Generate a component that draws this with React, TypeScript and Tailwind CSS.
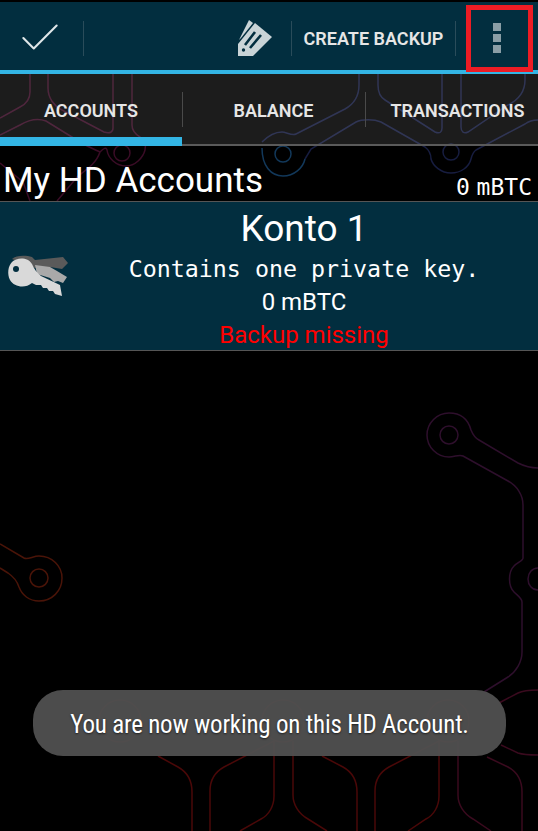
import React from 'react';
import { Check } from 'lucide-react';

// Circuit traces behind the whole page
function CircuitBackground() {
  return (
    <svg className="absolute inset-0 h-[831px] w-[538px]" viewBox="0 0 538 831" fill="none" strokeWidth="1.5">
      {/* left pad */}
      <g stroke="#4a1408">
        <path d="M0 544 L24 558 C28 560 33 556 39 556 C52 556 62 566 62 578 C62 591 52 601 39 601 C29 601 22 595 19 587 C17 581 14 577 8 573 L0 568" />
        <circle cx="39" cy="578" r="9" />
      </g>
      {/* right column */}
      <g stroke="#2e0f2c">
        <path d="M538 468 C530 468 524 466 518 463 L479 440 C475 438 473 435 471 430 C468 419 460 413 449 413 C437 413 427 423 427 435 C427 447 437 457 449 457 C455 457 459 454 463 456 L508 481 C517 486 523 495 523 505 L523 558 C523 561 518 562 514 566 C508 572 508 586 514 592 C518 596 522 598 522 602 L522 652 C522 662 516 672 508 677 L484 692" />
        <circle cx="449" cy="435" r="9" />
        <path d="M538 568 C532 568 528 573 528 579 C528 585 532 590 538 590" />
      </g>
      {/* pads under the toast */}
      <g stroke="#4a1010">
        <circle cx="120" cy="721" r="21" />
        <circle cx="283" cy="721" r="21" />
        <circle cx="448" cy="721" r="21" />
      </g>
      {/* bottom group */}
      <g stroke="#4a0808">
        <path d="M158 756 L178 767 C187 772 192 781 192 792 L192 831" />
        <path d="M210 831 L210 791 C210 781 215 772 224 767 L274 741 L274 796 C274 806 269 815 261 819 L240 831" />
        <path d="M293 741 L293 795 C293 805 299 814 308 819 L327 831" />
        <path d="M322 756 L343 767 C352 772 357 781 357 792 L357 831" />
        <path d="M375 831 L375 791 C375 781 380 772 389 767 L439 741 L439 796 C439 806 434 815 426 819 L408 831" />
      </g>
      <g stroke="#3a0a1e">
        <path d="M458 741 L458 795 C458 805 464 814 473 819 L491 831" />
        <path d="M487 757 L508 767 C517 772 522 781 522 792 L522 831" />
        <path d="M499 703 L518 693 C524 690 530 690 538 690" />
        <path d="M501 745 L518 753 C524 755 530 755 538 755" />
      </g>
      {/* top group, left half */}
      <g stroke="#3a0c26">
        <path d="M30 74 L30 92 C30 100 26 104 20 107 L0 118" />
        <path d="M48 74 L48 88 C48 98 54 106 62 110 L104 132 C110 134 113 132 113 128 L113 74" />
        <path d="M132 74 L132 125 C132 130 135 134 140 137 C146 141 146 146 145 150 C143 158 135 166 126 166 C116 166 108 158 107 150 C106 147 104 148 100 152 C96 164 86 170 78 176 L57 201" />
        <path d="M0 135 L20 125 C30 119 38 118 46 121 L80 142 C90 148 96 150 100 152" />
        <path d="M0 163 L23 182 L30 201" />
        <circle cx="122" cy="153" r="8" />
      </g>
      {/* top group, right half */}
      <g stroke="#171d40">
        <path d="M359 74 L359 85 C359 95 354 104 345 109 L296 134 C292 136 286 132 282 132 C274 132 268 136 262 142" />
        <path d="M378 74 L378 85 C378 92 380 97 385 100 L435 132 C440 134 442 132 442 128 L442 74" />
        <path d="M461 74 L461 127 C461 132 464 134 468 132 L508 105 C518 100 525 92 525 80 L525 74" />
        <path d="M305 159 L311 149 L356 122 C362 119 374 119 381 122 L425 147 C429 150 431 154 431 159 C433 166 441 173 451 173 C461 173 469 167 471 159 C472 155 473 152 476 150 L525 124 C529 121 534 120 538 120" />
        <circle cx="451" cy="152" r="8" />
      </g>
      <g stroke="#12385a">
        <path d="M262 148 C262 166 271 176 283 176 C294 176 303 168 305 159" />
        <circle cx="283" cy="154" r="8" />
      </g>
    </svg>
  );
}

function PencilTag() {
  return (
    <svg width="34" height="36" viewBox="0 0 34 36" className="shrink-0">
      <path fill="#c9d4d7" d="M1 20 L11 0 L15 3 L3 18 Z" />
      <path fill="#c9d4d7" d="M0 36 L0 24 L17 3 L34 17 L15 36 Z" />
      <path fill="none" stroke="#022e3f" strokeWidth="2.6" d="M7 25 L17 12 M12 28 L23 15" />
      <circle cx="5.5" cy="30" r="1.7" fill="#022e3f" />
    </svg>
  );
}

function KeysIcon() {
  return (
    <svg width="64" height="48" viewBox="0 0 64 48" className="shrink-0">
      <path fill="#5a5a5a" d="M6 7 C10 3 20 3 26 5 L29 8 L57 5 L62 11 L56 17 L44 15 L29 16 Z" />
      <path fill="#a9a9a9" d="M29 13 L44 15 L51 19 L61 25 L57 31 L52 29 L48 30 L44 26 L31 22 Z" />
      <path fill="#d9d9d9" d="M6 10 C11 5 22 5 26 12 C28 17 31 21 35 24 L54 33 L56 44 L49 42 L47 39 L43 39 L41 36 L37 36 L35 33 L30 33 L26 31 C19 37 8 35 4 28 C1 22 2 14 6 10 Z" />
      <circle cx="10" cy="17" r="3" fill="#022e3f" />
    </svg>
  );
}

const TABS = [
  { label: 'ACCOUNTS', width: 'w-[182px]' },
  { label: 'BALANCE', width: 'w-[183px]' },
  { label: 'TRANSACTIONS', width: 'w-[185px]' },
];

export default function App() {
  return (
    <div className="relative h-[831px] w-[538px] overflow-hidden bg-black font-['Roboto',sans-serif] text-white">
      <CircuitBackground />

      <div className="relative flex h-full flex-col pt-[2px]">
        {/* action bar */}
        <div className="flex h-[72px] shrink-0 items-center border-b-4 border-[#33b5e5] bg-[#022e3f] pt-[4px]">
          <div className="flex h-[35px] w-[84px] shrink-0 items-center justify-center border-r border-[#2a4c5a] pr-1">
            <Check className="h-[50px] w-[50px] shrink-0 text-[#dfe6e8]" strokeWidth={1} />
          </div>
          <div className="ml-auto flex items-center">
            <PencilTag />
            <div className="ml-[19px] flex h-[35px] w-[165px] items-center justify-center border-x border-[#2a4c5a] text-[18px] font-semibold text-[#e6e6e6]">
              CREATE BACKUP
            </div>
            <div className="flex w-[82px] flex-col items-center gap-[3px]">
              <span className="h-2 w-2 bg-[#8a9ea6]" />
              <span className="h-2 w-2 bg-[#8a9ea6]" />
              <span className="h-2 w-2 bg-[#8a9ea6]" />
            </div>
          </div>
        </div>

        {/* tabs */}
        <div className="flex h-[72px] shrink-0 overflow-hidden bg-white/[.11]">
          {TABS.map((tab, i) => (
            <div
              key={tab.label}
              className={`relative flex shrink-0 items-center justify-center text-[18px] font-semibold text-[#e6e6e6] ${tab.width}`}
            >
              {tab.label}
              {i < 2 && <span className="absolute -right-px top-[18px] h-[35px] w-px bg-[#4a4a4a]" />}
              <span className="absolute inset-x-0 bottom-0 h-[2px] bg-[#5a5a5a]" />
              {i === 0 && <span className="absolute inset-x-0 bottom-0 h-[9px] bg-[#33b5e5]" />}
            </div>
          ))}
        </div>

        {/* section header */}
        <div className="flex h-[55px] shrink-0 items-end justify-between pl-[3px] pr-[6px]">
          <span className="text-[35px] leading-[40px]">My HD Accounts</span>
          <span className="font-['DejaVu_Sans_Mono',monospace] text-[23px] leading-[28px] [word-spacing:-7px]">0 mBTC</span>
        </div>

        {/* account row */}
        <div className="flex h-[150px] shrink-0 border-y border-[#555] bg-[#022e3f]">
          <div className="flex w-[74px] shrink-0 items-start pl-[6px] pt-[50px]">
            <KeysIcon />
          </div>
          <div className="flex flex-1 flex-col items-center pr-[4px]">
            <span className="text-[37px] leading-[53px]">Konto 1</span>
            <span className="font-['DejaVu_Sans_Mono',monospace] text-[23.3px] leading-[28px]">Contains one private key.</span>
            <span className="mt-[2px] text-[24px] leading-[34px]">0 mBTC</span>
            <span className="text-[24px] leading-[32px] text-[#ff0000]">Backup missing</span>
          </div>
        </div>

        {/* toast */}
        <div className="absolute left-[33px] top-[690px] flex h-[66px] w-[473px] items-center justify-center rounded-[30px] bg-[#505050]/95 pt-[4px] text-[25px] tracking-[-0.2px] text-white [font-stretch:condensed] [text-shadow:0_1px_2px_rgba(0,0,0,0.6)]">
          You are now working on this HD Account.
        </div>

        {/* red highlight drawn over the overflow button */}
        <div className="absolute left-[466px] top-[5px] h-[67px] w-[67px] border-[5px] border-[#ed1c24]" />
      </div>
    </div>
  );
}
